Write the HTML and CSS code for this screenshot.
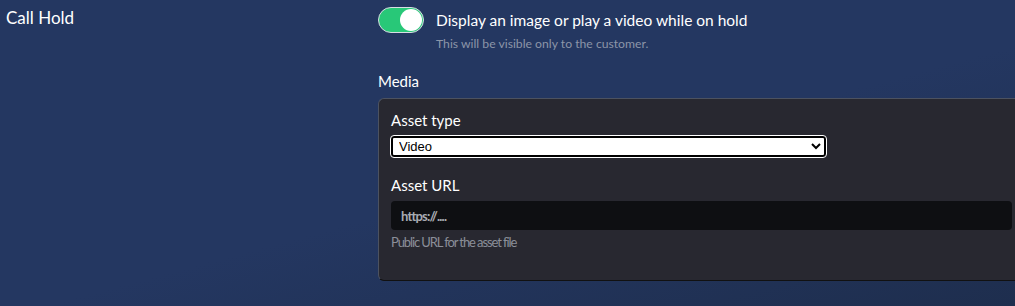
FILE: index.html
```html
<!DOCTYPE html>
<html lang="en">
<head>
    <meta charset="UTF-8">
    <meta name="viewport" content="width=device-width, initial-scale=1.0">
    <title>Call Hold</title>
    <link rel="stylesheet" href="styles.css">
</head>
<body>
    <div class="setting">
        <div class="setting-name">Call Hold</div>
        <div class="setting-body">
            <div class="toggle-row">
                <label class="switch">
                    <input type="checkbox" checked>
                    <span class="slider"></span>
                </label>
                <div>
                    <div class="toggle-label">Display an image or play a video while on hold</div>
                    <div class="toggle-hint">This will be visible only to the customer.</div>
                </div>
            </div>

            <div class="section-title">Media</div>
            <div class="panel">
                <div class="form-group">
                    <label for="assetType">Asset type</label>
                    <select id="assetType" class="select">
                        <option>Video</option>
                        <option>Image</option>
                    </select>
                </div>
                <div class="form-group">
                    <label for="assetUrl">Asset URL</label>
                    <input type="text" id="assetUrl" class="text-input" placeholder="https://....">
                    <div class="help">Public URL for the asset file</div>
                </div>
            </div>
        </div>
    </div>
</body>
</html>
```

FILE: styles.css
```css
html, body {
    height: 100%;
}
body {
    margin: 0;
    overflow: hidden;
    font-family: Lato, "Noto Sans", sans-serif;
    color: #fff;
    background: linear-gradient(165deg, #243761 55%, #1e2e4e 100%);
}
.setting {
    display: grid;
    grid-template-columns: 378px 1fr;
    padding-top: 7px;
}
.setting-name {
    font-size: 17px;
    padding-left: 6px;
    line-height: 22px;
}
.toggle-row {
    display: flex;
    gap: 12px;
}
.switch {
    position: relative;
    display: inline-block;
    width: 46px;
    height: 26px;
    flex-shrink: 0;
}
.switch input {
    display: none;
}
.slider {
    position: absolute;
    inset: 0;
    background-color: #28c878;
    border: 1px solid #d7dde3;
    border-radius: 14px;
    box-sizing: border-box;
}
.slider::after {
    content: "";
    position: absolute;
    top: 1px;
    right: 1px;
    width: 22px;
    height: 22px;
    border-radius: 50%;
    background: #fff;
}
.toggle-label {
    font-size: 15.5px;
    line-height: 22px;
    padding-top: 2px;
}
.toggle-hint {
    font-size: 12.2px;
    color: #8c95a8;
    margin-top: 5px;
}
.section-title {
    font-size: 15px;
    margin-top: 20px;
    line-height: 20px;
}
.panel {
    margin-top: 7px;
    width: 660px;
    background-color: #282830;
    border: 1px solid #4c5260;
    border-bottom-color: #111;
    border-right: none;
    border-radius: 6px 0 0 6px;
    padding: 11px 0 30px 12px;
}
.form-group {
    margin-bottom: 18px;
}
.form-group:last-child {
    margin-bottom: 0;
}
label {
    display: block;
    font-size: 15px;
    line-height: 20px;
    margin-bottom: 6px;
}
.select {
    display: block;
    width: 435px;
    height: 21px;
    font-family: Arial, "Liberation Sans", sans-serif;
    font-size: 13px;
    color: #000;
    background: #fff;
    border: 2px solid #000;
    border-radius: 3px;
    outline: 1px solid #fff;
    padding: 0 2px;
}
.text-input {
    display: block;
    width: 621px;
    height: 29px;
    box-sizing: border-box;
    background: #0e0f12;
    border: none;
    border-radius: 4px;
    padding: 0 10px;
    font-family: Lato, sans-serif;
    font-size: 13px;
    color: #ddd;
}
.text-input::placeholder {
    color: #a9acb3;
    font-weight: bold;
    letter-spacing: -0.8px;
}
.help {
    font-size: 13px;
    line-height: 16px;
    color: #8b8f99;
    margin-top: 4px;
    letter-spacing: -1.1px;
}
```
